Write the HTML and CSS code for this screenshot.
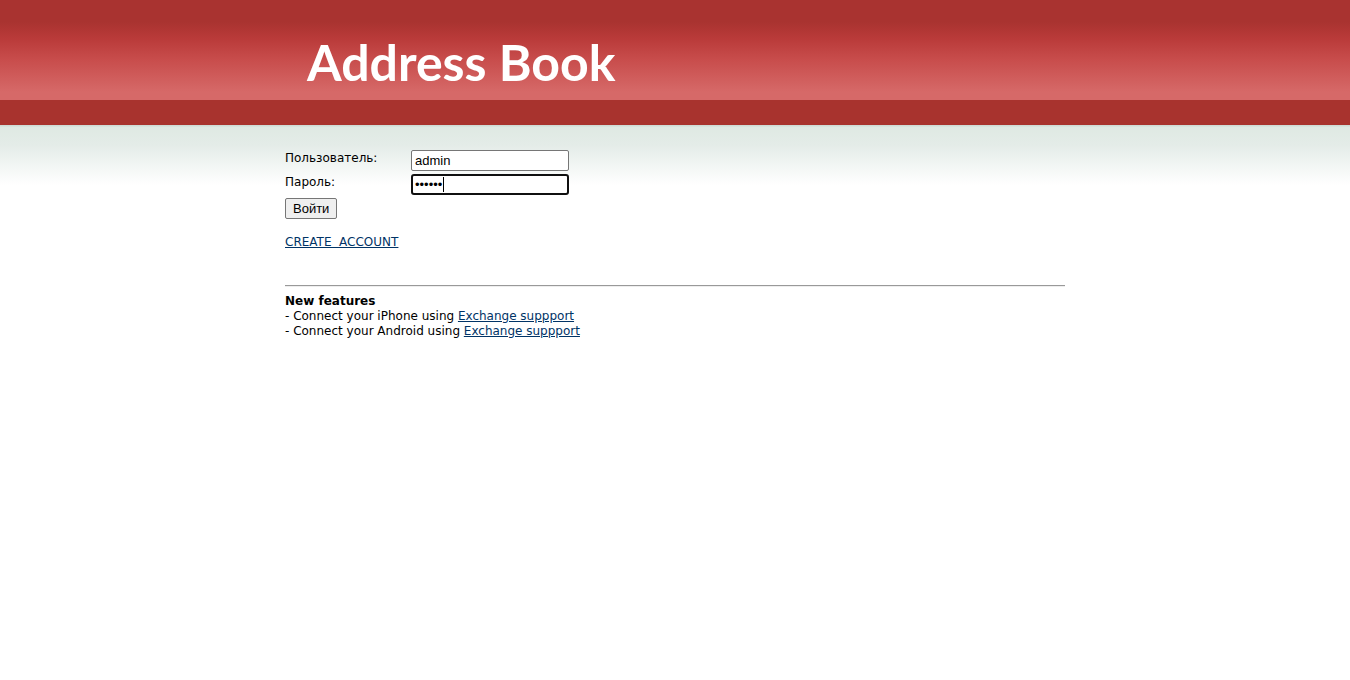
FILE: index.html
```html
<!DOCTYPE html>
<html lang="ru">
<head>
<meta charset="utf-8">
<title>Address Book</title>
<link rel="stylesheet" href="styles.css">
</head>
<body>
<header class="header">
  <div class="banner"><h1 class="logo">Address Book</h1></div>
  <div class="nav"></div>
</header>
<main class="content">
  <form class="login">
    <div class="row">
      <label class="label" for="user">Пользователь:</label>
      <input class="field" id="user" type="text" value="admin">
    </div>
    <div class="row">
      <label class="label" for="pass">Пароль:</label>
      <span class="field-wrap">
        <input class="field field-active" id="pass" type="password" value="secret" autofocus>
        <span class="caret"></span>
      </span>
    </div>
    <button class="submit" type="submit">Войти</button>
  </form>
  <a class="link create" href="#">CREATE&nbsp; ACCOUNT</a>
  <hr class="rule">
  <section class="features">
    <strong>New features</strong><br>
    - Connect your iPhone using <a class="link" href="#">Exchange suppport</a><br>
    - Connect your Android using <a class="link" href="#">Exchange suppport</a>
  </section>
</main>
</body>
</html>
```
FILE: styles.css
```css
body {
  margin: 0;
  background: #fff;
  color: #000;
  font: 12px/15px Verdana, "DejaVu Sans", sans-serif;
}
.banner {
  height: 100px;
  background: linear-gradient(#a93330 0, #a93330 22px, #b93a39 38px, #c84d4c 60px, #d66968 92px, #d66968 100px);
}
.logo {
  max-width: 780px;
  margin: 0 auto;
  padding: 30px 0 0 22px;
  box-sizing: border-box;
  color: #fff;
  font: 700 50px/64px Lato, sans-serif;
}
.nav {
  height: 25px;
  background: #a8332e;
}
.content {
  padding: 25px calc(50% - 390px) 0;
  background: linear-gradient(#cfdcd5 0, #cfdcd5 1px, #dfe9e3 2px, #e4ece8 20px, #fff 60px);
}
.login {
  display: flex;
  flex-direction: column;
  align-items: flex-start;
  gap: 3px;
}
.row {
  display: flex;
  align-items: flex-start;
}
.label {
  width: 126px;
  line-height: 17px;
}
.field-wrap {
  display: flex;
  position: relative;
}
.field {
  box-sizing: border-box;
  width: 158px;
  height: 21px;
  margin: 0;
  padding: 1px 3px;
  border: 1px solid #767676;
  border-radius: 2px;
  background: #fff;
  color: #000;
  font: 13px "Liberation Sans", Arial, sans-serif;
}
.field-active {
  padding: 0 2px;
  border: 2px solid #101010;
  border-radius: 3px;
  outline: none;
  caret-color: transparent;
}
.caret {
  position: absolute;
  top: 3px;
  left: 32px;
  width: 1px;
  height: 15px;
  background: #000;
}
.submit {
  box-sizing: border-box;
  height: 21px;
  margin: 0;
  padding: 0 7px;
  border: 1px solid #767676;
  border-radius: 2px;
  background: #efefef;
  color: #000;
  font: 13px "Liberation Sans", Arial, sans-serif;
}
.link {
  color: #036;
}
.create {
  display: inline-block;
  margin-top: 16px;
}
.rule {
  margin: 35px 0 7px;
  border: 0;
  border-top: 1px solid #999;
  border-bottom: 1px solid #eee;
}
```
